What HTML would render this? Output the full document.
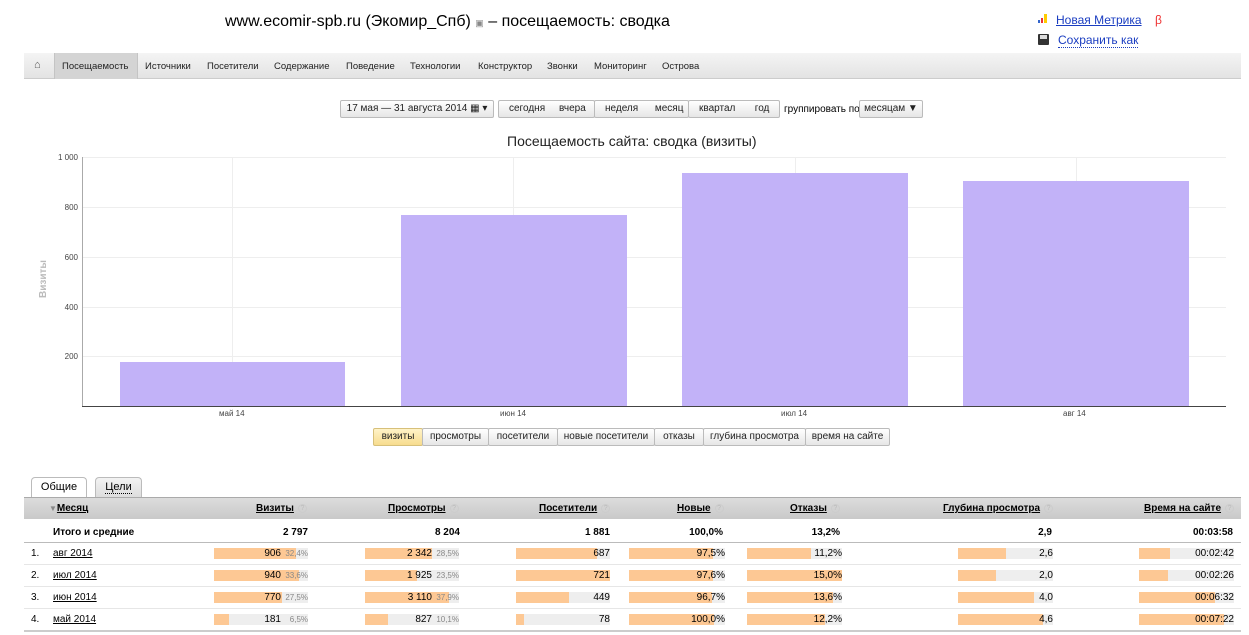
<!DOCTYPE html>
<html><head><meta charset="utf-8">
<style>
*{margin:0;padding:0;box-sizing:border-box}
body{width:1249px;height:635px;background:#fff;font-family:"Liberation Sans",Arial,sans-serif;color:#000;position:relative;overflow:hidden}
.a{position:absolute;white-space:nowrap}
.nav{left:24px;top:53px;width:1217px;height:26px;background:linear-gradient(#f4f4f4,#e3e3e3);border-bottom:1px solid #ccc}
.nav span{position:absolute;top:8px;font-size:9.5px;color:#222}
.btn{position:absolute;height:18px;border:1px solid #bbb;background:linear-gradient(#fff,#e6e6e6);font-size:10px;line-height:16px;text-align:center;color:#222;border-radius:2px}
.ytick{position:absolute;left:40px;width:38px;text-align:right;font-size:8px;color:#444}
.bar{position:absolute;background:#c2b2f8}
.th{position:absolute;top:503px;font-size:10px;font-weight:bold;text-decoration:underline}
.q{display:inline-block;width:9px;height:9px;border-radius:50%;border:1px solid #ccc;color:#bbb;font-size:7px;line-height:8px;text-align:center;text-decoration:none;margin-left:4px;font-weight:normal;vertical-align:1px}
.r{position:absolute;font-size:10px;text-align:right}
.cell{position:absolute;height:11px;background:#eee}
.cell i{position:absolute;left:0;top:0;height:11px;background:#fdc894}
.cell b{position:absolute;right:0;top:0;line-height:11px;font-weight:normal;font-size:10px}
</style></head><body>
<div class="a" style="left:225px;top:13px;font-size:16px">www.ecomir-spb.ru (Экомир_Спб) <span style="font-size:9px;color:#888">▣</span> – посещаемость: сводка</div>
<div class="a" style="left:1038px;top:14px;width:10px;height:10px">
<div class="a" style="left:0;top:6px;width:2px;height:3px;background:#36c"></div>
<div class="a" style="left:3px;top:4px;width:2px;height:5px;background:#e33"></div>
<div class="a" style="left:6px;top:0;width:3px;height:9px;background:#fc0"></div></div>
<div class="a" style="left:1056px;top:13px;font-size:12px;color:#1a3dc1;text-decoration:underline">Новая Метрика</div>
<div class="a" style="left:1155px;top:13px;font-size:12px;color:#e33">β</div>
<div class="a" style="left:1038px;top:34px;width:11px;height:11px;background:#333;border-radius:1px"><div class="a" style="left:2px;top:1px;width:7px;height:4px;background:#ddd"></div></div>
<div class="a" style="left:1058px;top:34px;font-size:12px;color:#1a3dc1;border-bottom:1px dotted #1a3dc1;line-height:13px">Сохранить как</div>

<div class="a nav">
<span style="left:10px;top:6px;font-size:11px;color:#555">⌂</span>
<div class="a" style="left:30px;top:0;width:84px;height:26px;background:#d4d4d4;border-left:1px solid #c4c4c4;border-right:1px solid #c4c4c4"></div>
<span style="left:38px">Посещаемость</span><span style="left:121px">Источники</span><span style="left:183px">Посетители</span><span style="left:250px">Содержание</span><span style="left:322px">Поведение</span><span style="left:386px">Технологии</span><span style="left:454px">Конструктор</span><span style="left:523px">Звонки</span><span style="left:570px">Мониторинг</span><span style="left:638px">Острова</span>
</div>

<div class="btn" style="left:340px;top:100px;width:154px">17 мая — 31 августа 2014 ▦ ▾</div>
<div class="btn" style="left:498px;top:100px;width:97px;text-align:left;padding-left:10px">сегодня&nbsp;&nbsp;&nbsp;&nbsp;&nbsp;вчера</div>
<div class="btn" style="left:594px;top:100px;width:95px;text-align:left;padding-left:10px">неделя&nbsp;&nbsp;&nbsp;&nbsp;&nbsp;&nbsp;месяц</div>
<div class="btn" style="left:688px;top:100px;width:92px;text-align:left;padding-left:10px">квартал&nbsp;&nbsp;&nbsp;&nbsp;&nbsp;&nbsp;&nbsp;год</div>
<div class="a" style="left:784px;top:104px;font-size:10px">группировать по</div>
<div class="btn" style="left:859px;top:100px;width:64px">месяцам ▼</div>

<div class="a" style="left:507px;top:133px;font-size:14px;color:#222">Посещаемость сайта: сводка (визиты)</div>

<svg class="a" style="left:0;top:0" width="1249" height="420">
<g stroke="#eee" stroke-width="1">
<line x1="232.5" y1="157" x2="232.5" y2="406"/><line x1="513.5" y1="157" x2="513.5" y2="406"/><line x1="795.5" y1="157" x2="795.5" y2="406"/><line x1="1076.5" y1="157" x2="1076.5" y2="406"/>
<line x1="82" y1="157.5" x2="1226" y2="157.5"/><line x1="82" y1="207.5" x2="1226" y2="207.5"/><line x1="82" y1="257.5" x2="1226" y2="257.5"/><line x1="82" y1="307.5" x2="1226" y2="307.5"/><line x1="82" y1="356.5" x2="1226" y2="356.5"/>
</g>
<line x1="82.5" y1="157" x2="82.5" y2="406" stroke="#aaa"/>
<line x1="82" y1="406.5" x2="1226" y2="406.5" stroke="#444"/>
</svg>
<div class="bar" style="left:120px;top:362px;width:225px;height:44px"></div>
<div class="bar" style="left:401px;top:215px;width:226px;height:191px"></div>
<div class="bar" style="left:682px;top:173px;width:226px;height:233px"></div>
<div class="bar" style="left:963px;top:181px;width:226px;height:225px"></div>
<div class="ytick" style="top:153px">1 000</div><div class="ytick" style="top:203px">800</div><div class="ytick" style="top:253px">600</div><div class="ytick" style="top:303px">400</div><div class="ytick" style="top:352px">200</div>
<div class="a" style="left:38px;top:298px;font-size:10px;font-weight:bold;color:#bbb;transform:rotate(-90deg);transform-origin:left top">Визиты</div>
<div class="a" style="left:219px;top:409px;font-size:8px;color:#444">май 14</div>
<div class="a" style="left:500px;top:409px;font-size:8px;color:#444">июн 14</div>
<div class="a" style="left:781px;top:409px;font-size:8px;color:#444">июл 14</div>
<div class="a" style="left:1063px;top:409px;font-size:8px;color:#444">авг 14</div>

<div class="btn" style="left:373px;top:428px;width:50px;background:linear-gradient(#fff3c8,#f7dc8e);border-color:#d7c07a">визиты</div>
<div class="btn" style="left:422px;top:428px;width:67px">просмотры</div>
<div class="btn" style="left:488px;top:428px;width:70px">посетители</div>
<div class="btn" style="left:557px;top:428px;width:98px">новые посетители</div>
<div class="btn" style="left:654px;top:428px;width:50px">отказы</div>
<div class="btn" style="left:703px;top:428px;width:103px">глубина просмотра</div>
<div class="btn" style="left:805px;top:428px;width:85px">время на сайте</div>

<div class="a" style="left:31px;top:477px;width:56px;height:21px;border:1px solid #bbb;border-bottom:none;border-radius:4px 4px 0 0;background:#fff;font-size:11px;text-align:center;line-height:19px">Общие</div>
<div class="a" style="left:95px;top:477px;width:47px;height:20px;border:1px solid #bbb;border-bottom:none;border-radius:4px 4px 0 0;background:linear-gradient(#f3f3f3,#ddd);font-size:11px;text-align:center;line-height:19px"><span style="border-bottom:1px dotted #000">Цели</span></div>
<div class="a" style="left:24px;top:497px;width:1217px;height:22px;background:linear-gradient(#dcdcdc,#c9c9c9);border-top:1px solid #aaa"></div>
<div class="th" style="left:49px;text-decoration:none"><span style="color:#888;font-size:8px">▼</span><u>Месяц</u></div>
<div class="th" style="left:256px">Визиты<span class="q">?</span></div>
<div class="th" style="left:388px">Просмотры<span class="q">?</span></div>
<div class="th" style="left:539px">Посетители<span class="q">?</span></div>
<div class="th" style="left:677px">Новые<span class="q">?</span></div>
<div class="th" style="left:790px">Отказы<span class="q">?</span></div>
<div class="th" style="left:943px">Глубина просмотра<span class="q">?</span></div>
<div class="th" style="left:1144px">Время на сайте<span class="q">?</span></div>

<div class="a" style="left:53px;top:527px;font-size:10px;font-weight:bold">Итого и средние</div>
<div class="r" style="left:200px;width:108px;top:527px;font-weight:bold">2 797</div>
<div class="r" style="left:360px;width:100px;top:527px;font-weight:bold">8 204</div>
<div class="r" style="left:510px;width:100px;top:527px;font-weight:bold">1 881</div>
<div class="r" style="left:620px;width:103px;top:527px;font-weight:bold">100,0%</div>
<div class="r" style="left:740px;width:100px;top:527px;font-weight:bold">13,2%</div>
<div class="r" style="left:950px;width:102px;top:527px;font-weight:bold">2,9</div>
<div class="r" style="left:1130px;width:103px;top:527px;font-weight:bold">00:03:58</div>
<div class="a" style="left:24px;top:542px;width:1217px;height:1px;background:#bbb"></div>
<div class="a" style="left:24px;top:564px;width:1217px;height:1px;background:#e6e6e6"></div>
<div class="a" style="left:24px;top:586px;width:1217px;height:1px;background:#e6e6e6"></div>
<div class="a" style="left:24px;top:608px;width:1217px;height:1px;background:#e6e6e6"></div>
<div class="a" style="left:24px;top:630px;width:1217px;height:2px;background:#ccc"></div>

<div class="a" style="left:31px;top:548px;font-size:10px">1.</div><div class="a" style="left:53px;top:548px;font-size:10px;text-decoration:underline">авг 2014</div>
<div class="a" style="left:31px;top:570px;font-size:10px">2.</div><div class="a" style="left:53px;top:570px;font-size:10px;text-decoration:underline">июл 2014</div>
<div class="a" style="left:31px;top:592px;font-size:10px">3.</div><div class="a" style="left:53px;top:592px;font-size:10px;text-decoration:underline">июн 2014</div>
<div class="a" style="left:31px;top:614px;font-size:10px">4.</div><div class="a" style="left:53px;top:614px;font-size:10px;text-decoration:underline">май 2014</div>

<div class="cell" style="left:214px;top:548px;width:94px"><i style="width:87%"></i><b style="right:27px">906</b><b style="font-size:8px;color:#888">32,4%</b></div>
<div class="cell" style="left:365px;top:548px;width:94px"><i style="width:71%"></i><b style="right:27px">2 342</b><b style="font-size:8px;color:#888">28,5%</b></div>
<div class="cell" style="left:516px;top:548px;width:94px"><i style="width:86%"></i><b>687</b></div>
<div class="cell" style="left:629px;top:548px;width:96px"><i style="width:87%"></i><b>97,5%</b></div>
<div class="cell" style="left:747px;top:548px;width:95px"><i style="width:67%"></i><b>11,2%</b></div>
<div class="cell" style="left:958px;top:548px;width:95px"><i style="width:51%"></i><b>2,6</b></div>
<div class="cell" style="left:1139px;top:548px;width:95px"><i style="width:33%"></i><b>00:02:42</b></div>

<div class="cell" style="left:214px;top:570px;width:94px"><i style="width:90%"></i><b style="right:27px">940</b><b style="font-size:8px;color:#888">33,6%</b></div>
<div class="cell" style="left:365px;top:570px;width:94px"><i style="width:55%"></i><b style="right:27px">1 925</b><b style="font-size:8px;color:#888">23,5%</b></div>
<div class="cell" style="left:516px;top:570px;width:94px"><i style="width:100%"></i><b>721</b></div>
<div class="cell" style="left:629px;top:570px;width:96px"><i style="width:88%"></i><b>97,6%</b></div>
<div class="cell" style="left:747px;top:570px;width:95px"><i style="width:100%"></i><b>15,0%</b></div>
<div class="cell" style="left:958px;top:570px;width:95px"><i style="width:40%"></i><b>2,0</b></div>
<div class="cell" style="left:1139px;top:570px;width:95px"><i style="width:30%"></i><b>00:02:26</b></div>

<div class="cell" style="left:214px;top:592px;width:94px"><i style="width:72%"></i><b style="right:27px">770</b><b style="font-size:8px;color:#888">27,5%</b></div>
<div class="cell" style="left:365px;top:592px;width:94px"><i style="width:89%"></i><b style="right:27px">3 110</b><b style="font-size:8px;color:#888">37,9%</b></div>
<div class="cell" style="left:516px;top:592px;width:94px"><i style="width:56%"></i><b>449</b></div>
<div class="cell" style="left:629px;top:592px;width:96px"><i style="width:86%"></i><b>96,7%</b></div>
<div class="cell" style="left:747px;top:592px;width:95px"><i style="width:91%"></i><b>13,6%</b></div>
<div class="cell" style="left:958px;top:592px;width:95px"><i style="width:80%"></i><b>4,0</b></div>
<div class="cell" style="left:1139px;top:592px;width:95px"><i style="width:80%"></i><b>00:06:32</b></div>

<div class="cell" style="left:214px;top:614px;width:94px"><i style="width:16%"></i><b style="right:27px">181</b><b style="font-size:8px;color:#888">6,5%</b></div>
<div class="cell" style="left:365px;top:614px;width:94px"><i style="width:24%"></i><b style="right:27px">827</b><b style="font-size:8px;color:#888">10,1%</b></div>
<div class="cell" style="left:516px;top:614px;width:94px"><i style="width:9%"></i><b>78</b></div>
<div class="cell" style="left:629px;top:614px;width:96px"><i style="width:89%"></i><b>100,0%</b></div>
<div class="cell" style="left:747px;top:614px;width:95px"><i style="width:82%"></i><b>12,2%</b></div>
<div class="cell" style="left:958px;top:614px;width:95px"><i style="width:89%"></i><b>4,6</b></div>
<div class="cell" style="left:1139px;top:614px;width:95px"><i style="width:89%"></i><b>00:07:22</b></div>
</body></html>
